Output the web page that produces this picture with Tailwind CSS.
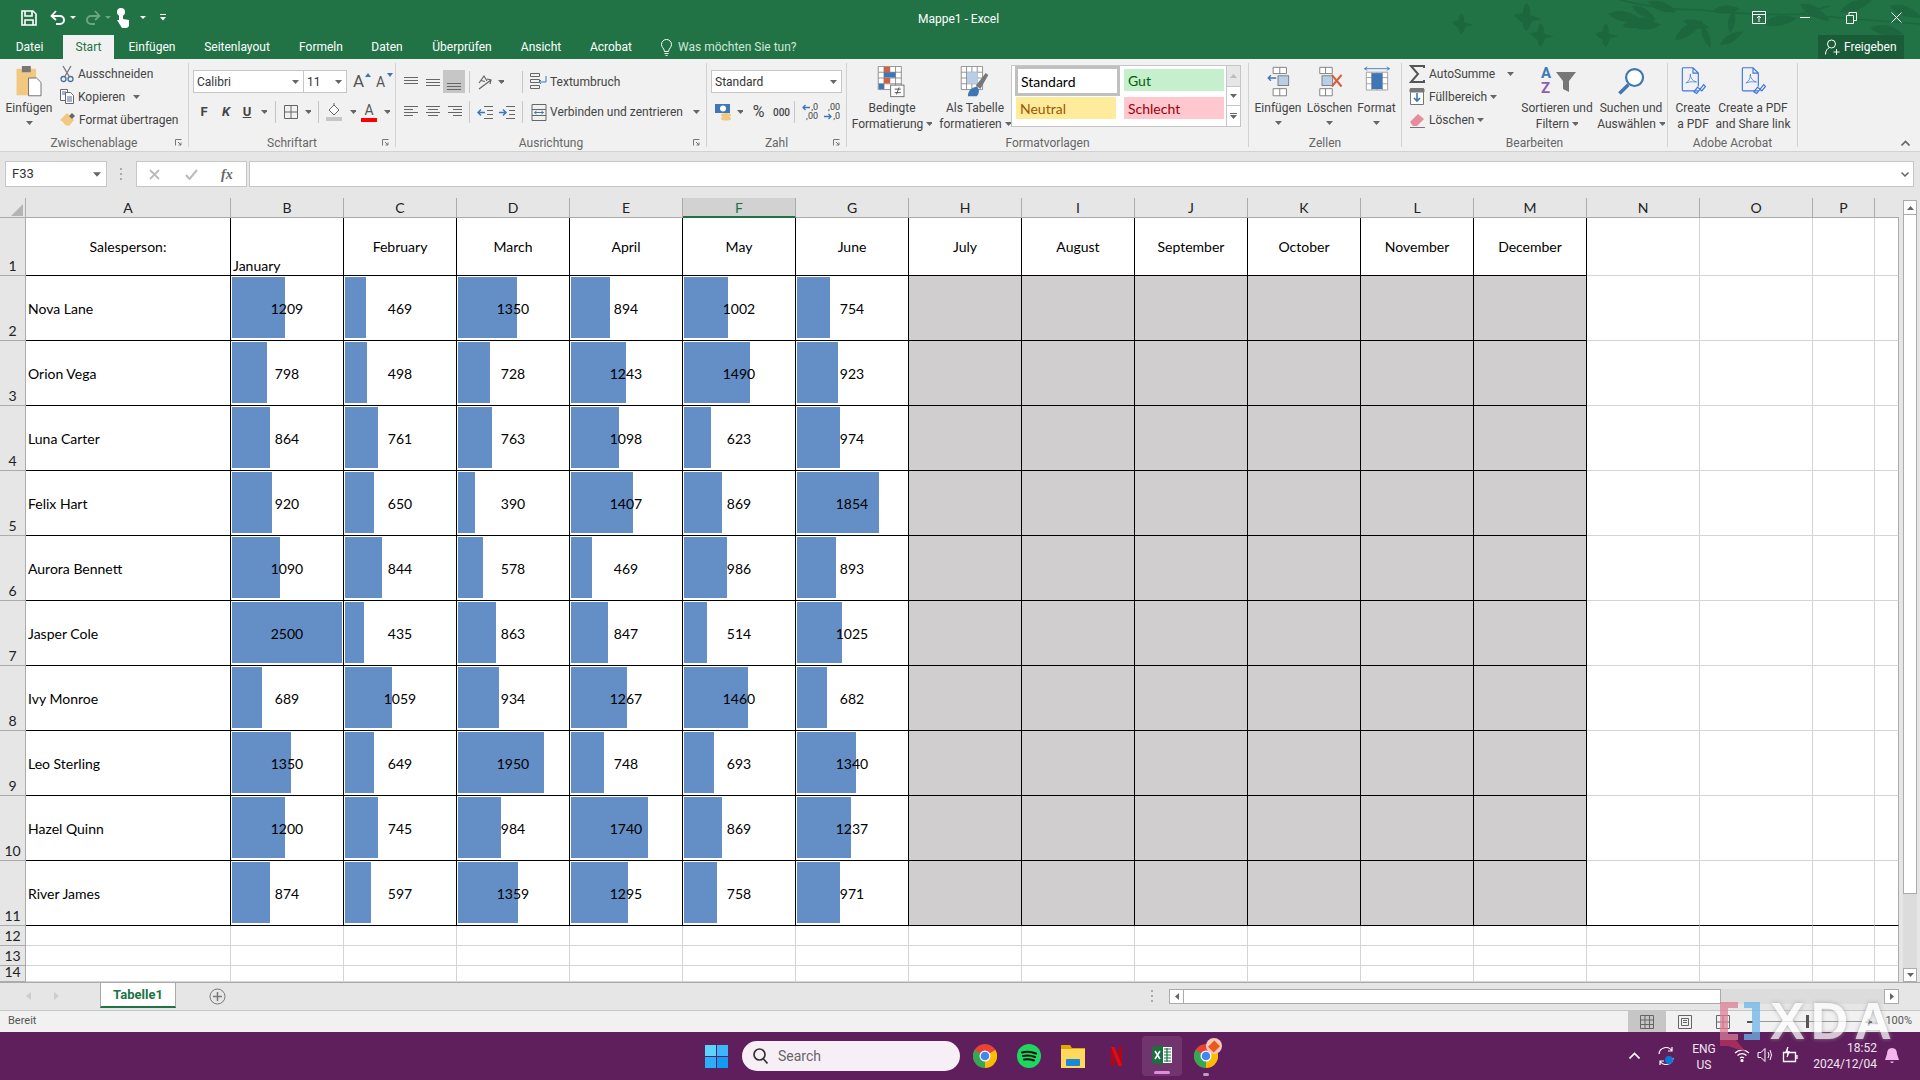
<!DOCTYPE html>
<html lang="de">
<head>
<meta charset="utf-8">
<title>Mappe1 - Excel</title>
<script src="https://cdn.jsdelivr.net/npm/@tailwindcss/browser@4"></script>
</head>
<body class="relative w-[1920px] h-[1080px] overflow-hidden bg-[#e6e6e6] font-['Roboto',sans-serif] text-[12px] text-[#444]">

<svg class="hidden">
  <defs>
    <path id="c" d="M0 0h7L3.500 4z" fill="#666"/>
    <path id="leaf" d="M0 0Q14 -11 34 0Q14 9 0 0Z"/>
    <path id="bird" d="M0 12L9 10Q9 3 13 0Q17 5 16 12L28 16L18 18Q16 24 13 28Q8 25 9 20Q4 17 0 12Z"/>
  </defs>
</svg>

<div class="relative h-[59px] bg-[#217346] flex flex-col overflow-hidden">
  <!-- birds and branch behind the title -->
  <svg class="absolute left-0 top-0 w-[1920px] h-[59px]" fill="#1c673e" stroke="none">
    <use href="#bird" transform="translate(1452 13) scale(.75)"/>
    <use href="#bird" transform="translate(1514 3) scale(1)"/>
    <use href="#bird" transform="translate(1530 23) scale(.85)"/>
    <use href="#bird" transform="translate(1595 23) scale(.85)"/>
    <path d="M1620 0Q1660 10 1700 10Q1760 16 1800 14L1830 6M1800 14Q1860 20 1920 24" fill="none" stroke="#1c673e" stroke-width="1.600"/>
    <use href="#leaf" transform="translate(1608 14) rotate(10)"/>
    <use href="#leaf" transform="translate(1622 26) rotate(-10)"/>
    <use href="#leaf" transform="translate(1632 6) rotate(30) scale(.8)"/>
    <use href="#leaf" transform="translate(1648 2) rotate(20) scale(.9)"/>
    <use href="#leaf" transform="translate(1634 27) rotate(-5) scale(.8)"/>
    <use href="#leaf" transform="translate(1675 40) rotate(-35)"/>
    <use href="#leaf" transform="translate(1683 21) rotate(15) scale(.8)"/>
    <use href="#leaf" transform="translate(1702 26) rotate(70) scale(.7)"/>
    <use href="#leaf" transform="translate(1720 45) rotate(-30) scale(.8)"/>
    <use href="#leaf" transform="translate(1713 11) rotate(-5) scale(.8)"/>
    <use href="#leaf" transform="translate(1730 33) rotate(-80) scale(.7)"/>
    <use href="#leaf" transform="translate(1764 24) rotate(-10)"/>
    <use href="#leaf" transform="translate(1800 4) rotate(30)"/>
    <use href="#leaf" transform="translate(1840 12) rotate(-20)"/>
    <use href="#leaf" transform="translate(1870 28) rotate(10)"/>
    <use href="#leaf" transform="translate(1890 6) rotate(20)"/>
  </svg>

  <div class="relative h-[35px] flex items-center text-white">
    <svg class="ml-[21px] w-[16px] h-[16px]" viewBox="0 0 16 16" fill="none" stroke="#fff" stroke-width="1.600"><path d="M1 1h11l3 3v11H1z"/><path d="M4 1v5h7V1M4 15v-5h8v5"/></svg>
    <svg class="ml-[13px] w-[16px] h-[16px]" viewBox="0 0 16 16" fill="none" stroke="#fff" stroke-width="2"><path d="M2 6h8a4 4 0 0 1 0 8H6"/><path d="M6 1L1.500 6L6 10" stroke-width="1.800"/></svg>
    <svg class="ml-[4px] w-[6px] h-[4px]"><path d="M0 0h6L3 3z" fill="#fff"/></svg>
    <svg class="ml-[9px] w-[16px] h-[16px]" viewBox="0 0 16 16" fill="none" stroke="#6ba585" stroke-width="2"><path d="M14 6H6a4 4 0 0 0 0 8h4"/><path d="M10 1l4.500 5L10 10" stroke-width="1.800"/></svg>
    <svg class="ml-[4px] w-[6px] h-[4px]"><path d="M0 0h6L3 3z" fill="#6ba585"/></svg>
    <svg class="ml-[5px] w-[15px] h-[20px]" viewBox="0 0 15 20" fill="#fff"><circle cx="5" cy="4" r="4"/><path d="M3 4h4v7l6 1v6q-1 2-3 2H6L1 12l2 0z"/></svg>
    <svg class="ml-[9px] w-[6px] h-[4px]"><path d="M0 0h6L3 3z" fill="#fff"/></svg>
    <svg class="ml-[14px] w-[6px] h-[7px]"><path d="M0 0h6v1H0zM0 3h6L3 6.500z" fill="#fff"/></svg>
    <span class="absolute left-[918px] w-[80px] whitespace-nowrap text-center text-[12px] top-[10px]">Mappe1 - Excel</span>
    <svg class="absolute left-[1752px] top-[11px] w-[14px] h-[13px]" viewBox="0 0 14 13" fill="none" stroke="#fff"><path d="M.5.500h13v12H.5zM.5 3.500h13M7 11V5M5 7l2-2 2 2"/></svg>
    <span class="absolute left-[1800px] top-[17px] w-[10px] h-px bg-white"></span>
    <svg class="absolute left-[1846px] top-[12px] w-[11px] h-[12px]" viewBox="0 0 11 12" fill="none" stroke="#fff"><path d="M.5 3.500h7v8h-7zM3 3.500v-3h7.500v8h-3"/></svg>
    <svg class="absolute left-[1891px] top-[12px] w-[11px] h-[11px]" viewBox="0 0 11 11" stroke="#fff"><path d="M.5.500l10 10M10.500.500l-10 10"/></svg>
  </div>

  <div class="relative h-[24px] flex items-end text-white text-[12px] leading-[24px]">
    <span class="w-[59px] mr-[4px] text-center">Datei</span>
    <span class="w-[51px] h-[24px] bg-[#f1f1f1] text-[#217346] text-center">Start</span>
    <span class="w-[76px] text-center">Einfügen</span>
    <span class="w-[94px] text-center">Seitenlayout</span>
    <span class="w-[74px] text-center">Formeln</span>
    <span class="w-[58px] text-center">Daten</span>
    <span class="w-[92px] text-center">Überprüfen</span>
    <span class="w-[66px] text-center">Ansicht</span>
    <span class="w-[74px] text-center">Acrobat</span>
    <svg class="ml-[13px] mb-[3px] w-[11px] h-[17px]" viewBox="0 0 11 17" fill="none" stroke="#fff"><path d="M3.500 12.500C3 9 .5 8.500.5 5.500a5 5 0 0 1 10 0c0 3-2.500 3.500-3 7zM3.500 14.500h4M4.500 16.500h2"/></svg>
    <span class="ml-[6px] text-[#cfe6d8]">Was möchten Sie tun?</span>
    <div class="absolute left-[1818px] top-0 w-[86px] h-[24px] bg-[#1a5c38] flex items-center">
      <svg class="ml-[7px] w-[15px] h-[16px]" viewBox="0 0 15 16" fill="none" stroke="#fff"><circle cx="6.500" cy="5" r="4"/><path d="M.5 15.500c0-4 2-6 4-7M11.500 10v6M8.500 13h6"/></svg>
      <span class="ml-[4px]">Freigeben</span>
    </div>
  </div>
</div>

<div class="relative h-[93px] bg-[#f1f1f1] border-b border-[#d2d2d2] flex pt-[4px] text-[12px]">

  <!-- Zwischenablage -->
  <div class="w-[189px] h-[84px] border-r border-[#d2d2d2] flex flex-col">
    <div class="h-[71px] shrink-0 flex">
      <div class="w-[58px] flex flex-col items-center">
        <svg class="mt-[3px] mb-[2px] w-[28px] h-[32px] shrink-0" viewBox="0 0 30 36"><rect x="1" y="3" width="22" height="30" rx="1" fill="#f0c87f"/><rect x="7" y="0" width="10" height="7" fill="#777"/><path d="M14.500 13.500h9l5 5v15h-14z" fill="#fff" stroke="#666"/></svg>
        <span class="leading-[16px]">Einfügen</span>
        <svg class="mt-[5px] w-[7px] h-[4px]"><use href="#c"/></svg>
      </div>
      <div class="ml-[2px] mt-[-1px] flex flex-col">
        <div class="h-[23px] flex items-center gap-[4px]"><svg class="w-[14px] h-[18px]" viewBox="0 0 14 18" fill="none" stroke="#4a6f9f" stroke-width="1.300"><circle cx="3.500" cy="14" r="2.500"/><circle cx="10.500" cy="14" r="2.500"/><path d="M4.500 12L11 1M9.500 12L3 1" stroke="#777"/></svg><span>Ausschneiden</span></div>
        <div class="h-[23px] flex items-center gap-[4px]"><svg class="w-[14px] h-[15px]" viewBox="0 0 14 15" fill="#fff" stroke="#666"><path d="M.5.500h7v11h-7z"/><path d="M5.500 3.500h5l3 3v8h-8z"/><path d="M2 3h4M2 5h3M7 8h5M7 10h5M7 12h5" stroke="#4a6f9f"/></svg><span>Kopieren</span><svg class="ml-[4px] w-[7px] h-[4px]"><use href="#c"/></svg></div>
        <div class="h-[23px] flex items-center gap-[4px]"><svg class="w-[15px] h-[15px]" viewBox="0 0 15 15"><path d="M0 8L7 1l7 7-5 6-4-1-2-3z" fill="#f0c87f"/><path d="M9 4l3-3 3 3-3 3z" fill="#666"/></svg><span>Format übertragen</span></div>
      </div>
    </div>
    <div class="h-[13px] flex justify-center relative text-[#666] leading-[19px]">Zwischenablage<svg class="absolute right-[6px] top-[5px] w-[7px] h-[7px]" viewBox="0 0 7 7" fill="none" stroke="#777"><path d="M.5 6.500v-6h6M3 3l3 3M6 3.500V6H3.500"/></svg></div>
  </div>

  <!-- Schriftart -->
  <div class="w-[207px] h-[84px] border-r border-[#d2d2d2] flex flex-col">
    <div class="h-[71px] shrink-0 flex flex-col pt-[7px]">
      <div class="h-[23px] ml-[4px] flex items-center">
        <div class="w-[111px] h-[23px] bg-white border border-[#c6c6c6] flex items-center justify-between px-[3px] pr-[4px] text-[#333]">Calibri<svg class="w-[7px] h-[4px]"><use href="#c"/></svg></div>
        <div class="w-[43px] h-[23px] bg-white border border-l-0 border-[#c6c6c6] flex items-center justify-between px-[3px] pr-[4px] text-[#333]">11<svg class="w-[7px] h-[4px]"><use href="#c"/></svg></div>
        <span class="ml-[6px] w-[16px] text-[17px] text-[#555] leading-none relative">A<svg class="absolute right-[-2px] top-0 w-[6px] h-[4px]"><path d="M0 4h6L3 0z" fill="#3f77b5"/></svg></span>
        <span class="ml-[7px] w-[16px] text-[14px] text-[#555] leading-none relative">A<svg class="absolute right-[-1px] top-[-2px] w-[6px] h-[4px]"><path d="M0 0h6L3 4z" fill="#3f77b5"/></svg></span>
      </div>
      <div class="mt-[7px] h-[24px] ml-[4px] flex items-center font-bold text-[13px] text-[#444]">
        <span class="w-[22px] text-center">F</span>
        <span class="w-[22px] text-center italic">K</span>
        <span class="w-[20px] text-center underline">U</span>
        <svg class="ml-[4px] w-[6px] h-[4px]"><use href="#c"/></svg>
        <span class="ml-[8px] w-px h-[22px] bg-[#c6c6c6]"></span>
        <svg class="ml-[8px] w-[14px] h-[14px]" viewBox="0 0 14 14" fill="none" stroke="#666"><path d="M.5.500h13v13H.5zM7 .5v13M.5 7h13"/></svg>
        <svg class="ml-[7px] w-[6px] h-[4px]"><use href="#c"/></svg>
        <span class="ml-[7px] w-px h-[22px] bg-[#c6c6c6]"></span>
        <svg class="ml-[7px] w-[16px] h-[18px]" viewBox="0 0 16 18"><path d="M3 7l5-5 5 5-5 5z" fill="#fff" stroke="#666"/><path d="M8 2V0" stroke="#666"/><rect y="14" width="16" height="4" fill="#c6c6c6"/></svg>
        <svg class="ml-[8px] w-[6px] h-[4px]"><use href="#c"/></svg>
        <span class="ml-[5px] w-[16px] text-center text-[14px] font-normal leading-[15px] text-[#555] border-b-[4px] border-[#f00]">A</span>
        <svg class="ml-[7px] w-[6px] h-[4px]"><use href="#c"/></svg>
      </div>
    </div>
    <div class="h-[13px] flex justify-center relative text-[#666] leading-[19px]">Schriftart<svg class="absolute right-[6px] top-[5px] w-[7px] h-[7px]" viewBox="0 0 7 7" fill="none" stroke="#777"><path d="M.5 6.500v-6h6M3 3l3 3M6 3.500V6H3.500"/></svg></div>
  </div>

  <!-- Ausrichtung -->
  <div class="w-[311px] h-[84px] border-r border-[#d2d2d2] flex flex-col">
    <div class="h-[71px] shrink-0 flex flex-col pt-[7px] whitespace-nowrap">
      <div class="h-[23px] flex items-center">
        <svg class="ml-[8px] w-[14px] h-[12px]" viewBox="0 0 14 12" stroke="#666"><path d="M0 1.500h14M0 4.500h14M0 7.500h14"/></svg>
        <svg class="ml-[8px] w-[14px] h-[12px]" viewBox="0 0 14 12" stroke="#666"><path d="M0 3.500h14M0 6.500h14M0 9.500h14"/></svg>
        <div class="ml-[3px] w-[22px] h-[23px] bg-[#c6c6c6] flex items-center justify-center"><svg class="w-[14px] h-[12px] mt-[5px]" viewBox="0 0 14 12" stroke="#666"><path d="M0 5.500h14M0 8.500h14M0 11.500h14"/></svg></div>
        <span class="ml-[4px] w-px h-[22px] bg-[#c6c6c6]"></span>
        <svg class="ml-[7px] w-[16px] h-[16px]" viewBox="0 0 16 16" fill="none" stroke="#666" stroke-width="1.200"><path d="M2 9l5-7 3 5M4 6.500l4 1M2 15l12-9M10 5l4 1-1 4" /></svg>
        <svg class="ml-[5px] w-[6px] h-[4px]"><use href="#c"/></svg>
        <span class="ml-[18px] w-px h-[22px] bg-[#c6c6c6]"></span>
        <svg class="ml-[7px] w-[17px] h-[17px]" viewBox="0 0 17 17" fill="none" stroke="#666"><path d="M.5.500h9v3h-9zM.5 6.500h9v3h-9zM.5 12.500h9v3h-9z"/><path d="M16 3v6h-7M11 7l-2 2 2 2" stroke="#3f77b5"/></svg>
        <span class="ml-[3px]">Textumbruch</span>
      </div>
      <div class="mt-[7px] h-[24px] flex items-center">
        <svg class="ml-[8px] w-[14px] h-[12px]" viewBox="0 0 14 12" stroke="#666"><path d="M0 .5h14M0 3.500h9M0 6.500h14M0 9.500h9"/></svg>
        <svg class="ml-[8px] w-[14px] h-[12px]" viewBox="0 0 14 12" stroke="#666"><path d="M0 .5h14M2 3.500h10M0 6.500h14M2 9.500h10"/></svg>
        <svg class="ml-[8px] w-[14px] h-[12px]" viewBox="0 0 14 12" stroke="#666"><path d="M0 .5h14M5 3.500h9M0 6.500h14M5 9.500h9"/></svg>
        <span class="ml-[7px] w-px h-[22px] bg-[#c6c6c6]"></span>
        <svg class="ml-[7px] w-[16px] h-[13px]" viewBox="0 0 16 13" fill="none" stroke="#666"><path d="M7 .5h9M7 12.500h9M10 4.500h6M10 8.500h6"/><path d="M8 6.500H1M4 3.500l-3 3 3 3" stroke="#3f77b5" stroke-width="1.500"/></svg>
        <svg class="ml-[6px] w-[16px] h-[13px]" viewBox="0 0 16 13" fill="none" stroke="#666"><path d="M7 .5h9M7 12.500h9M10 4.500h6M10 8.500h6"/><path d="M0 6.500h7M4 3.500l3 3-3 3" stroke="#3f77b5" stroke-width="1.500"/></svg>
        <span class="ml-[7px] w-px h-[22px] bg-[#c6c6c6]"></span>
        <svg class="ml-[8px] w-[16px] h-[17px]" viewBox="0 0 15 17" fill="none" stroke="#666"><path d="M.5.500h14v16H.5zM.5 5.500h14M.5 11.500h14"/><path d="M3 8.500h9M5 7l-2 1.500L5 10M10 7l2 1.500L10 10" stroke="#3f77b5"/></svg>
        <span class="ml-[3px]">Verbinden und zentrieren</span>
        <svg class="ml-[10px] w-[7px] h-[4px]"><use href="#c"/></svg>
      </div>
    </div>
    <div class="h-[13px] flex justify-center relative text-[#666] leading-[19px]">Ausrichtung<svg class="absolute right-[6px] top-[5px] w-[7px] h-[7px]" viewBox="0 0 7 7" fill="none" stroke="#777"><path d="M.5 6.500v-6h6M3 3l3 3M6 3.500V6H3.500"/></svg></div>
  </div>

  <!-- Zahl -->
  <div class="w-[140px] h-[84px] border-r border-[#d2d2d2] flex flex-col">
    <div class="h-[71px] shrink-0 flex flex-col pt-[7px]">
      <div class="ml-[4px] w-[131px] h-[23px] bg-white border border-[#c6c6c6] flex items-center justify-between px-[3px] pr-[4px] text-[#333]">Standard<svg class="w-[7px] h-[4px]"><use href="#c"/></svg></div>
      <div class="mt-[7px] h-[24px] flex items-center">
        <svg class="ml-[8px] w-[17px] h-[18px]" viewBox="0 0 17 18"><rect y="1" width="15" height="9" fill="#3f77b5"/><circle cx="8" cy="5.500" r="3" fill="#fff"/><ellipse cx="11" cy="12" rx="5" ry="2" fill="#f0c87f"/><ellipse cx="11" cy="15.500" rx="5" ry="2" fill="#f0c87f"/></svg>
        <svg class="ml-[5px] w-[6px] h-[4px]"><use href="#c"/></svg>
        <span class="ml-[7px] text-[16px] leading-none w-[17px] text-center">%</span>
        <span class="ml-[6px] text-[10px] w-[14px] text-center font-medium">000</span>
        <span class="ml-[7px] w-px h-[22px] bg-[#c6c6c6]"></span>
        <span class="ml-[7px] w-[16px] relative h-[18px]"><span class="absolute right-0 top-[-2px] text-[9px]">,0</span><span class="absolute right-0 top-[7px] text-[9px]">,00</span><svg class="absolute left-0 top-[1px] w-[8px] h-[7px]" viewBox="0 0 8 7" fill="none" stroke="#3f77b5" stroke-width="1.300"><path d="M8 3.500H1M3.500 1L1 3.500 3.500 6"/></svg></span>
        <span class="ml-[6px] w-[16px] relative h-[18px]"><span class="absolute right-0 top-[-2px] text-[9px]">,00</span><span class="absolute right-0 top-[7px] text-[9px]">,0</span><svg class="absolute left-0 top-[10px] w-[8px] h-[7px]" viewBox="0 0 8 7" fill="none" stroke="#3f77b5" stroke-width="1.300"><path d="M0 3.500h7M4.500 1L7 3.500 4.500 6"/></svg></span>
      </div>
    </div>
    <div class="h-[13px] flex justify-center relative text-[#666] leading-[19px]">Zahl<svg class="absolute right-[6px] top-[5px] w-[7px] h-[7px]" viewBox="0 0 7 7" fill="none" stroke="#777"><path d="M.5 6.500v-6h6M3 3l3 3M6 3.500V6H3.500"/></svg></div>
  </div>

  <!-- Formatvorlagen -->
  <div class="w-[402px] h-[84px] border-r border-[#d2d2d2] flex flex-col">
    <div class="h-[71px] shrink-0 flex">
      <div class="w-[90px] flex flex-col items-center leading-[16px] whitespace-nowrap">
        <svg class="mt-[3px] mb-[2px] w-[32px] h-[32px] shrink-0" viewBox="0 0 32 36"><path d="M.5.500h26v26H.5zM.5 7h26M.5 13.500h26M.5 20h26M7 .5v26M20 .5v26" fill="#fff" stroke="#888"/><rect x="7" y="1" width="7" height="6" fill="#d5603d"/><rect x="7" y="7" width="13" height="6" fill="#3f77b5"/><rect x="7" y="13.500" width="7" height="6" fill="#d5603d"/><rect x="1" y="20" width="6" height="6" fill="#3f77b5"/><rect x="14.500" y="21.500" width="15" height="13" fill="#fff" stroke="#666"/><path d="M19 26h7M19 30h7M24 24l-3 8" stroke="#444" fill="none"/></svg>
        <span>Bedingte</span>
        <span class="flex items-center gap-[3px]">Formatierung<svg class="w-[6px] h-[4px]"><use href="#c"/></svg></span>
      </div>
      <div class="w-[76px] flex flex-col items-center leading-[16px] whitespace-nowrap">
        <svg class="mt-[3px] mb-[2px] w-[32px] h-[32px] shrink-0" viewBox="0 0 32 36"><path d="M.5.500h24v26H.5zM.5 7h24M.5 13.500h24M.5 20h24M6.500.5v26M12.500.5v26M18.500.5v26" fill="#fff" stroke="#888"/><rect x="7" y="7" width="12" height="13" fill="#b8cde6"/><path d="M17 22L28 8l3 2-9 16z" fill="#777"/><path d="M8 34q0-9 10-11 5 5 0 11z" fill="#3f77b5"/></svg>
        <span>Als Tabelle</span>
        <span class="flex items-center gap-[3px]">formatieren<svg class="w-[6px] h-[4px]"><use href="#c"/></svg></span>
      </div>
      <div class="ml-[-2px] mt-[2px] w-[230px] h-[62px] bg-white border border-[#c6c6c6] flex text-[14px] font-['Lato',sans-serif]">
        <div class="w-[214px] grid grid-cols-[105px_100px] grid-rows-[31px_24px] gap-x-[4px] pl-[3px]">
          <div class="h-[30px] border-[3px] border-[#c0c0c0] bg-white text-black flex items-center pl-[3px]">Standard</div>
          <div class="mt-[3px] h-[22px] bg-[#c6efce] text-[#006100] flex items-center pl-[4px]">Gut</div>
          <div class="h-[22px] bg-[#ffeb9c] text-[#9c5700] flex items-center pl-[4px] ml-[1px] w-[100px]">Neutral</div>
          <div class="h-[22px] bg-[#ffc7ce] text-[#9c0006] flex items-center pl-[4px]">Schlecht</div>
        </div>
        <div class="w-[14px] ml-[1px] flex flex-col border-l border-[#c6c6c6]">
          <div class="h-[21px] bg-[#e6e6e6] flex items-center justify-center border-b border-[#c6c6c6]"><svg class="w-[7px] h-[4px]"><path d="M0 4h7L3.500 0z" fill="#bbb"/></svg></div>
          <div class="h-[19px] flex items-center justify-center border-b border-[#c6c6c6]"><svg class="w-[7px] h-[4px]"><use href="#c"/></svg></div>
          <div class="h-[20px] flex flex-col items-center justify-center"><span class="w-[7px] h-px bg-[#666] mb-px"></span><svg class="w-[7px] h-[4px]"><use href="#c"/></svg></div>
        </div>
      </div>
    </div>
    <div class="h-[13px] flex justify-center text-[#666] leading-[19px]">Formatvorlagen</div>
  </div>

  <!-- Zellen -->
  <div class="w-[153px] h-[84px] border-r border-[#d2d2d2] flex flex-col">
    <div class="h-[71px] shrink-0 flex leading-[16px]">
      <div class="ml-[3px] w-[52px] flex flex-col items-center">
        <svg class="mt-[3px] mb-[2px] w-[32px] h-[32px] shrink-0" viewBox="0 0 32 36"><path d="M10.500 1.500h15v7h-15zM18 1.500v7M10.500 25.500h15v8h-15zM18 25.500v8" fill="#fff" stroke="#777"/><path d="M14 13.500h-9M8 10.500l-3 3 3 3" fill="none" stroke="#3f77b5" stroke-width="1.500"/><rect x="16" y="11" width="12" height="11" fill="#b8cde6" stroke="#777"/></svg>
        <span>Einfügen</span>
        <svg class="mt-[5px] w-[7px] h-[4px]"><use href="#c"/></svg>
      </div>
      <div class="w-[51px] flex flex-col items-center">
        <svg class="mt-[3px] mb-[2px] w-[32px] h-[32px] shrink-0" viewBox="0 0 32 36"><path d="M4.500 1.500h14v7h-14zM11 1.500v7M4.500 25.500h14v8h-14zM11 25.500v8" fill="#fff" stroke="#777"/><rect x="7" y="11" width="12" height="11" fill="#b8cde6" stroke="#777"/><path d="M18 10l11 13M29 10L18 23" stroke="#d5603d" stroke-width="2.400"/></svg>
        <span>Löschen</span>
        <svg class="mt-[5px] w-[7px] h-[4px]"><use href="#c"/></svg>
      </div>
      <div class="w-[43px] flex flex-col items-center">
        <svg class="mt-[3px] mb-[2px] w-[32px] h-[32px] shrink-0" viewBox="0 0 32 36"><path d="M4 27V7h24v20zM10 7v20M16 7v20M22 7v20M4 13h24M4 20h24" fill="#fff" stroke="#999"/><rect x="10" y="8" width="12" height="18" fill="#3f77b5"/><path d="M2 3h28M5 1L2 3l3 2M27 1l3 2-3 2" fill="none" stroke="#3f77b5"/></svg>
        <span>Format</span>
        <svg class="mt-[5px] w-[7px] h-[4px]"><use href="#c"/></svg>
      </div>
    </div>
    <div class="h-[13px] flex justify-center text-[#666] leading-[19px]">Zellen</div>
  </div>

  <!-- Bearbeiten -->
  <div class="w-[266px] h-[84px] border-r border-[#d2d2d2] flex flex-col">
    <div class="h-[71px] shrink-0 flex">
      <div class="ml-[7px] mt-[-1px] w-[110px] flex flex-col">
        <div class="h-[23px] flex items-center"><svg class="w-[16px] h-[18px]" viewBox="0 0 16 18" fill="none" stroke="#555" stroke-width="2"><path d="M15 3V1H2l7 8-7 8h13v-2"/></svg><span class="ml-[4px]">AutoSumme</span><svg class="ml-[12px] w-[7px] h-[4px]"><use href="#c"/></svg></div>
        <div class="h-[23px] flex items-center"><svg class="w-[16px] h-[17px]" viewBox="0 0 16 17" fill="none" stroke="#777"><path d="M1.500.5h13v16h-13z" fill="#fff"/><path d="M1 1h14v3H1z" fill="#777"/><path d="M8 5v8M5 10l3 3 3-3" stroke="#3f77b5" stroke-width="1.600"/></svg><span class="ml-[4px]">Füllbereich</span><svg class="ml-[3px] w-[7px] h-[4px]"><use href="#c"/></svg></div>
        <div class="h-[23px] flex items-center"><svg class="w-[16px] h-[16px]" viewBox="0 0 16 16"><path d="M1 10L9 2l6 5-7 7H4z" fill="#e88b9c"/><path d="M1 15.500h15" stroke="#777"/></svg><span class="ml-[4px]">Löschen</span><svg class="ml-[3px] w-[7px] h-[4px]"><use href="#c"/></svg></div>
      </div>
      <div class="w-[76px] flex flex-col items-center leading-[16px] whitespace-nowrap">
        <span class="mt-[3px] mb-[2px] w-[32px] h-[32px] shrink-0 relative font-bold text-[15px] leading-[15px]"><span class="absolute left-0 top-0 text-[#3f77b5]">A</span><span class="absolute left-0 top-[15px] text-[#8e5fad]">Z</span><svg class="absolute right-[-3px] top-[6px] w-[20px] h-[20px]" viewBox="0 0 20 20"><path d="M0 0h20L13 9v11l-6-3V9z" fill="#777"/></svg></span>
        <span>Sortieren und</span>
        <span class="flex items-center gap-[3px]">Filtern<svg class="w-[6px] h-[4px]"><use href="#c"/></svg></span>
      </div>
      <div class="w-[72px] flex flex-col items-center leading-[16px] whitespace-nowrap">
        <svg class="mt-[3px] mb-[2px] w-[32px] h-[32px] shrink-0" viewBox="0 0 32 36" fill="none"><circle cx="20" cy="13" r="9.500" stroke="#3f77b5" stroke-width="2.500" fill="#fff"/><path d="M13 21L3 31" stroke="#3f77b5" stroke-width="4"/></svg>
        <span>Suchen und</span>
        <span class="flex items-center gap-[3px]">Auswählen<svg class="w-[6px] h-[4px]"><use href="#c"/></svg></span>
      </div>
    </div>
    <div class="h-[13px] flex justify-center text-[#666] leading-[19px]">Bearbeiten</div>
  </div>

  <!-- Adobe Acrobat -->
  <div class="w-[130px] h-[84px] border-r border-[#d2d2d2] flex flex-col">
    <div class="h-[71px] shrink-0 flex leading-[16px] whitespace-nowrap">
      <div class="w-[50px] flex flex-col items-center">
        <svg class="mt-[3px] mb-[2px] w-[28px] h-[32px] shrink-0" viewBox="0 0 28 36" fill="none" stroke="#3f77e0" stroke-width="1.300"><path d="M3 2h11l6 6v15M20 28H3q-1 0-1-1V3q0-1 1-1M14 2v6h6"/><path d="M6 19q5-2 5-10 0 7 7 9-7-1-12 1" stroke-width=".8"/><path d="M18 31l8-10M15 29l4-5 3 2-4 5zM22 26l4-5 2 2-4 5z"/></svg>
        <span>Create</span><span>a PDF</span>
      </div>
      <div class="w-[72px] ml-[-1px] flex flex-col items-center">
        <svg class="mt-[3px] mb-[2px] w-[28px] h-[32px] shrink-0" viewBox="0 0 28 36" fill="none" stroke="#3f77e0" stroke-width="1.300"><path d="M3 2h11l6 6v15M20 28H3q-1 0-1-1V3q0-1 1-1M14 2v6h6"/><path d="M6 19q5-2 5-10 0 7 7 9-7-1-12 1" stroke-width=".8"/><path d="M18 31l8-10M15 29l4-5 3 2-4 5zM22 26l4-5 2 2-4 5z"/></svg>
        <span>Create a PDF</span><span>and Share link</span>
      </div>
    </div>
    <div class="h-[13px] flex justify-center text-[#666] leading-[19px]">Adobe Acrobat</div>
  </div>

  <svg class="absolute left-[1901px] top-[81px] w-[9px] h-[6px]" viewBox="0 0 9 6" fill="none" stroke="#666" stroke-width="1.600"><path d="M.5 5.500l4-4 4 4"/></svg>
</div>

<div class="h-[46px] bg-[#e6e6e6] flex items-start pt-[9px] pl-[5px]">
  <div class="w-[102px] h-[26px] bg-white border border-[#c6c6c6] flex items-center justify-between pl-[6px] pr-[5px] text-[13px] text-[#333]">F33<svg class="w-[8px] h-[5px]" viewBox="0 0 7 4"><use href="#c"/></svg></div>
  <div class="ml-[13px] mt-[7px] flex flex-col gap-[3px]"><span class="w-[2px] h-[2px] bg-[#aaa]"></span><span class="w-[2px] h-[2px] bg-[#aaa]"></span><span class="w-[2px] h-[2px] bg-[#aaa]"></span></div>
  <div class="ml-[14px] w-[111px] h-[26px] bg-white border border-[#c6c6c6] flex items-center">
    <svg class="ml-[12px] w-[11px] h-[11px]" viewBox="0 0 11 11" stroke="#bbb" stroke-width="1.800"><path d="M1 1l9 9M10 1l-9 9"/></svg>
    <svg class="ml-[25px] w-[13px] h-[11px]" viewBox="0 0 13 11" fill="none" stroke="#bbb" stroke-width="2"><path d="M1 6l3.500 4L12 1"/></svg>
    <span class="ml-[23px] font-['Liberation_Serif',serif] italic font-bold text-[14px] text-[#666]">fx</span>
  </div>
  <div class="ml-[2px] w-[1665px] h-[26px] bg-white border border-[#c6c6c6] flex items-center justify-end pr-[4px]"><svg class="w-[8px] h-[5px]" viewBox="0 0 8 5" fill="none" stroke="#666" stroke-width="1.500"><path d="M.5.5L4 4 7.500.5"/></svg></div>
</div>

<div class="h-[784px] flex">
  <div id="sheet" class="w-[1899px] h-[784px] overflow-hidden grid grid-cols-[26px_205px_repeat(14,113px)_62px_24px] grid-rows-[20px_58px_repeat(10,65px)_20px_20px_16px] font-['Lato',sans-serif] text-[14px] text-black"></div>
  <div class="w-[21px] flex flex-col pl-[4px] pr-[3px] pt-[2px]">
    <div class="h-[15px] bg-white border border-[#ababab] flex items-center justify-center"><svg class="w-[7px] h-[4px]"><path d="M0 4h7L3.500 0z" fill="#666"/></svg></div>
    <div class="h-[679px] bg-white border-x border-b border-[#ababab]"></div>
    <div class="flex-1 bg-[#dcdcdc]"></div>
    <div class="h-[14px] bg-white border border-[#ababab] flex items-center justify-center"><svg class="w-[7px] h-[4px]"><use href="#c"/></svg></div>
  </div>
</div>

<div class="relative h-[28px] bg-[#e6e6e6] border-t border-[#ababab] flex items-start">
  <svg class="ml-[26px] mt-[9px] w-[5px] h-[8px]"><path d="M5 0v8L0 4z" fill="#ccc"/></svg>
  <svg class="ml-[23px] mt-[9px] w-[5px] h-[8px]"><path d="M0 0v8l5-4z" fill="#ccc"/></svg>
  <div class="ml-[41px] w-[76px] h-[25px] bg-white border-x border-[#ababab] border-b-2 border-b-[#217346] text-center font-bold text-[13px] leading-[23px] text-[#217346]">Tabelle1</div>
  <svg class="ml-[33px] mt-[5px] w-[17px] h-[17px]" viewBox="0 0 17 17" fill="none" stroke="#777"><circle cx="8.500" cy="8.500" r="7.500"/><path d="M8.500 4v9M4 8.500h9" stroke-width="1.500"/></svg>
  <div class="ml-[925px] mt-[7px] flex flex-col gap-[3px]"><span class="w-[2px] h-[2px] bg-[#aaa]"></span><span class="w-[2px] h-[2px] bg-[#aaa]"></span><span class="w-[2px] h-[2px] bg-[#aaa]"></span></div>
  <div class="ml-[16px] mt-[6px] w-[730px] h-[15px] flex">
    <div class="w-[15px] bg-white border border-[#ababab] flex items-center justify-center"><svg class="w-[4px] h-[7px]"><path d="M4 0v7L0 3.500z" fill="#666"/></svg></div>
    <div class="w-[537px] bg-white border border-l-0 border-[#ababab]"></div>
    <div class="flex-1 bg-[#dcdcdc]"></div>
    <div class="w-[15px] bg-white border border-[#ababab] flex items-center justify-center"><svg class="w-[4px] h-[7px]"><path d="M0 0v7l4-3.500z" fill="#666"/></svg></div>
  </div>
</div>

<div class="relative h-[22px] bg-[#f1f1f1] border-t border-[#c6c6c6] flex items-center text-[11px] text-[#555]">
  <span class="ml-[8px]">Bereit</span>
  <div class="ml-auto h-[21px] w-[38px] bg-[#c6c6c6] flex items-center justify-center"><svg class="w-[14px] h-[14px]" viewBox="0 0 14 14" fill="none" stroke="#666"><path d="M.5.500h13v13H.5zM5 .5v13M9.500.5v13M.5 5h13M.5 9.500h13"/></svg></div>
  <svg class="ml-[12px] w-[14px] h-[14px]" viewBox="0 0 14 14" fill="none" stroke="#666"><path d="M.5.500h13v13H.5zM3.500 3.500h7v7h-7zM5 5.500h4M5 7.500h4"/></svg>
  <svg class="ml-[24px] w-[14px] h-[14px]" viewBox="0 0 14 14" fill="none" stroke="#666"><path d="M.5.500h13v13H.5zM.5 7h13M7 .5v13"/></svg>
  <span class="ml-[17px] w-[6px] h-[2px] bg-[#555]"></span>
  <div class="ml-[7px] w-[102px] h-px bg-[#999] relative"><span class="absolute left-[46px] top-[-6px] w-[3px] h-[13px] bg-[#555]"></span></div>
  <span class="ml-[3px] text-[14px] font-bold leading-none">+</span>
  <span class="ml-[13px] mr-[8px]">100%</span>
</div>

<div class="relative h-[48px] bg-[#5f1f5c] text-white flex items-center">
  <div class="ml-[705px] w-[23px] h-[23px] grid grid-cols-2 gap-[1px]">
    <span class="bg-[#5fd4fb]"></span><span class="bg-[#3ab8fb]"></span><span class="bg-[#2aaefa]"></span><span class="bg-[#129bf5]"></span>
  </div>
  <div class="ml-[14px] w-[218px] h-[30px] rounded-full bg-[#f6f0f6] flex items-center text-[14px] text-[#666]">
    <svg class="ml-[11px] w-[15px] h-[16px]" viewBox="0 0 15 16" fill="none" stroke="#333" stroke-width="1.700"><circle cx="6.500" cy="6.500" r="5.500"/><path d="M10.500 11l4 4.500"/></svg>
    <span class="ml-[10px]">Search</span>
  </div>
  <svg class="ml-[13px] w-[24px] h-[24px]" viewBox="0 0 24 24"><circle cx="12" cy="12" r="12" fill="#ea4335"/><path d="M12 12L1.600 6A12 12 0 0 0 12 24z" fill="#34a853"/><path d="M12 12V24A12 12 0 0 0 22.400 6z" fill="#fbbc05"/><circle cx="12" cy="12" r="5.500" fill="#fff"/><circle cx="12" cy="12" r="4.300" fill="#4285f4"/></svg>
  <svg class="ml-[20px] w-[24px] h-[24px]" viewBox="0 0 24 24"><circle cx="12" cy="12" r="12" fill="#1ed760"/><path d="M5 8.500q7-2 14 1M6 12q6-1.500 12 1M7 15.500q5-1 10 1" fill="none" stroke="#111" stroke-width="2" stroke-linecap="round"/></svg>
  <svg class="ml-[20px] w-[24px] h-[24px]" viewBox="0 0 24 24"><path d="M0 1h9l2 3h13v20H0z" fill="#e0a800"/><rect y="5" width="24" height="19" fill="#ffd95c"/><rect x="5" y="15" width="14" height="7" rx="1" fill="#1e86d8"/></svg>
  <svg class="ml-[26px] w-[11px] h-[19px]" viewBox="0 0 11 19"><path d="M0 0h3.500v19L0 19z" fill="#b20710"/><path d="M7.500 0H11v19H7.500z" fill="#b20710"/><path d="M0 0h3.500L11 19H7.500z" fill="#e50914"/></svg>
  <div class="ml-[20px] w-[40px] h-[40px] rounded bg-white/10 flex flex-col items-center relative">
    <svg class="mt-[9px] w-[20px] h-[20px]" viewBox="0 0 20 20"><rect x="6" y="2" width="14" height="16" fill="#fff"/><path d="M12 4h7M12 7h7M12 10h7M12 13h7M12 16h7M15 3v14" stroke="#1d7044" stroke-width="1.200"/><path d="M0 2l11-2v20L0 18z" fill="#1d6f42"/><path d="M3 6l5 8M8 6l-5 8" stroke="#fff" stroke-width="1.500"/></svg>
    <span class="absolute bottom-[2px] w-[16px] h-[3px] rounded bg-[#e388df]"></span>
  </div>
  <div class="ml-[12px] w-[24px] h-[24px] relative">
    <svg class="w-[24px] h-[24px]" viewBox="0 0 24 24"><circle cx="12" cy="12" r="12" fill="#ea4335"/><path d="M12 12L1.600 6A12 12 0 0 0 12 24z" fill="#34a853"/><path d="M12 12V24A12 12 0 0 0 22.400 6z" fill="#fbbc05"/><circle cx="12" cy="12" r="5.500" fill="#fff"/><circle cx="12" cy="12" r="4.300" fill="#4285f4"/></svg>
    <span class="absolute left-[12px] top-[-6px] w-[16px] h-[16px] rounded-full bg-[#f7c7b8] flex items-center justify-center"><span class="w-[8px] h-[9px] bg-[#e8591d] rotate-45"></span></span>
    <span class="absolute left-[9px] bottom-[-8px] w-[6px] h-[3px] rounded bg-[#b9a2b8]"></span>
  </div>
  <svg class="absolute left-[1629px] top-[20px] w-[11px] h-[7px]" viewBox="0 0 11 7" fill="none" stroke="#fff" stroke-width="1.600"><path d="M.5 6.500l5-5 5 5"/></svg>
  <svg class="absolute left-[1657px] top-[14px] w-[18px] h-[20px]" viewBox="0 0 18 20" fill="none" stroke="#fff" stroke-width="1.200"><path d="M2 8a7 7 0 0 1 13-3M15 1v4h-4M16 12a7 7 0 0 1-13 3M3 19v-4h4"/><circle cx="12" cy="14" r="4" fill="#0a78dc" stroke="none"/></svg>
  <div class="absolute left-[1688px] top-[9px] w-[32px] text-center text-[12px] leading-[16px] text-[#f0e6ef]">ENG<br>US</div>
  <svg class="absolute left-[1734px] top-[16px] w-[16px] h-[14px]" viewBox="0 0 16 14" fill="none" stroke="#fff" stroke-width="1.200"><path d="M1 5a10 10 0 0 1 14 0M3.500 7.500a6.500 6.500 0 0 1 9 0M6 10a3 3 0 0 1 4 0"/><circle cx="8" cy="12.500" r="1" fill="#fff"/></svg>
  <svg class="absolute left-[1757px] top-[15px] w-[16px] h-[16px]" viewBox="0 0 16 16" fill="none" stroke="#fff"><path d="M1 5.500h3l4-4v13l-4-4H1zM11 5q2 3 0 6M13 3q3 5 0 10"/></svg>
  <svg class="absolute left-[1782px] top-[15px] w-[17px] h-[16px]" viewBox="0 0 17 16" fill="none" stroke="#fff" stroke-width="1.300"><path d="M1.500 5.500h12v9h-12zM15 8v4"/><path d="M6 0L4 5h3l-2 5" fill="#fff"/></svg>
  <div class="absolute right-[43px] top-[8px] text-right text-[12px] leading-[16px] text-[#f0e6ef]">18:52<br>2024/12/04</div>
  <svg class="absolute left-[1885px] top-[16px] w-[14px] h-[16px]" viewBox="0 0 14 16" fill="#f2b5ec"><path d="M7 0q5 0 5 6l2 6H0l2-6q0-6 5-6zM5 13.500h4q-2 3-4 0z"/></svg>
</div>

<!-- XDA watermark over the status bar -->
<div class="absolute left-[1720px] top-[1002px] w-[190px] h-[38px] flex items-center opacity-75">
  <span class="relative w-[18px] h-[38px] border-y-[6px] border-l-[8px] border-[#dd7d97]"><svg class="absolute left-[-8px] top-[32px] w-[26px] h-[12px]" viewBox="0 0 26 12"><path d="M0 0h16l10 12L8 6H0z" fill="#b8335c"/></svg></span>
  <span class="ml-[6px] w-[16px] h-[38px] border-y-[6px] border-r-[8px] border-[#6db6ea]"></span>
  <span class="ml-[10px] font-['Liberation_Sans',sans-serif] font-bold text-[52px] tracking-[6px] leading-[38px] text-white [text-shadow:0_0_4px_#999]">XDA</span>
</div>

<script type="module">
const sheet = document.getElementById('sheet')

const months = ['January','February','March','April','May','June','July','August','September','October','November','December']
const sales = [
  ['Nova Lane', 1209, 469, 1350, 894, 1002, 754],
  ['Orion Vega', 798, 498, 728, 1243, 1490, 923],
  ['Luna Carter', 864, 761, 763, 1098, 623, 974],
  ['Felix Hart', 920, 650, 390, 1407, 869, 1854],
  ['Aurora Bennett', 1090, 844, 578, 469, 986, 893],
  ['Jasper Cole', 2500, 435, 863, 847, 514, 1025],
  ['Ivy Monroe', 689, 1059, 934, 1267, 1460, 682],
  ['Leo Sterling', 1350, 649, 1950, 748, 693, 1340],
  ['Hazel Quinn', 1200, 745, 984, 1740, 869, 1237],
  ['River James', 874, 597, 1359, 1295, 758, 971],
]

const headCell = 'flex items-center justify-center bg-[#e6e6e6] border-r border-b border-[#ababab] text-[#222]'
const activeHead = 'flex items-center justify-center bg-[#d2d2d2] border-r border-[#ababab] border-b-2 border-b-[#217346] text-[#217346]'
const rowHead = 'flex items-end justify-center bg-[#e6e6e6] border-r border-b border-[#ababab] text-[#222] leading-[18px]'
const blackCell = 'relative flex items-center justify-center bg-white border-r border-b border-black'
const greyCell = 'bg-[#d0cece] border-r border-b border-black'
const plainCell = 'bg-white border-r border-b border-[#d4d4d4]'
const lastCell = 'bg-white border-b border-[#d4d4d4] border-r border-r-[#ababab]'
const plainEnd = 'bg-white border-r border-[#d4d4d4] border-b border-b-black'
const lastEnd = 'bg-white border-r border-r-[#ababab] border-b border-b-black'

function add(cls, html) {
  const el = document.createElement('div')
  el.className = cls
  if (html) el.innerHTML = html
  sheet.append(el)
}

function rest(lastRow) {
  for (let i = 0; i < 3; i++) add(lastRow ? plainEnd : plainCell)
  add(lastRow ? lastEnd : lastCell)
}

// column headers
add(headCell, '<svg class="w-[12px] h-[12px] ml-[8px] mt-[4px]"><path d="M12 0v12H0z" fill="#b4b4b4"/></svg>')
for (const col of 'ABCDEFGHIJKLMNOP') add(col == 'F' ? activeHead : headCell, col)
add('bg-[#e6e6e6] border-b border-[#ababab]')

// row 1
add(rowHead, '1')
add(blackCell, 'Salesperson:')
months.forEach((m, i) => {
  if (i == 0) add('flex items-end bg-white border-r border-b border-black pl-[2px] leading-[18px]', m)
  else add(blackCell, m)
})
rest()

// data rows
sales.forEach((row, r) => {
  add(rowHead, String(r + 2))
  add('flex items-center bg-white border-r border-b border-black pl-[2px]', row[0])
  row.slice(1).forEach(v => {
    const bar = `<span class="absolute left-[1px] top-[1px] bottom-[2px] bg-[#648ec6]" style="width:${v / 2500 * 110}px"></span><span class="relative">${v}</span>`
    add(blackCell, bar)
  })
  for (let i = 0; i < 6; i++) add(greyCell)
  rest(r == sales.length - 1)
})

// empty rows below the table
for (const n of [12, 13, 14]) {
  add(rowHead, String(n))
  for (let i = 0; i < 13; i++) add(plainCell)
  rest()
}
</script>
</body>
</html>
